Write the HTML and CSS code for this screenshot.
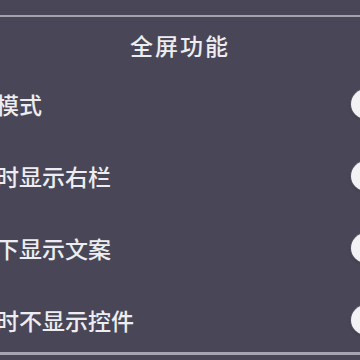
FILE: index.html
```html
<!DOCTYPE html>
<html lang="zh-CN">
<head>
    <meta charset="UTF-8">
    <meta name="viewport" content="width=device-width, initial-scale=1.0">
    <title>全屏功能</title>
    <link rel="stylesheet" href="styles.css">
</head>
<body>
    <div class="sheet">
        <div class="panel">
            <h2 class="panel-title">全屏功能</h2>
            <ul class="option-list">
                <li class="option">
                    <span class="option-label">模式</span>
                    <span class="switch"><span class="knob"></span></span>
                </li>
                <li class="option">
                    <span class="option-label">时显示右栏</span>
                    <span class="switch"><span class="knob"></span></span>
                </li>
                <li class="option">
                    <span class="option-label">下显示文案</span>
                    <span class="switch"><span class="knob"></span></span>
                </li>
                <li class="option">
                    <span class="option-label">时不显示控件</span>
                    <span class="switch"><span class="knob"></span></span>
                </li>
            </ul>
        </div>
    </div>
</body>
</html>
```

FILE: styles.css
```css
body {
    margin: 0;
    width: 360px;
    height: 360px;
    overflow: hidden;
    background-color: #494757;
    font-family: 'Noto Sans CJK SC', 'Noto Sans', sans-serif;
    color: #ededf1;
}

.sheet {
    padding-top: 15px;
    width: 480px;
    margin-left: -60px;
}

.panel {
    border-top: 2px solid #a3a1ad;
    border-bottom: 3px solid #a6a4b0;
}

.panel-title {
    margin: 0;
    text-align: center;
    font-size: 23px;
    font-weight: 500;
    letter-spacing: 2px;
    line-height: 56px;
}

.option-list {
    list-style: none;
    margin: 0;
    padding: 1px 18px 2px 56px;
    display: flex;
    flex-direction: column;
    gap: 12px;
}

.option {
    height: 60px;
    display: flex;
    align-items: center;
    justify-content: space-between;
}

.option-label {
    font-size: 23px;
    font-weight: 500;
    line-height: 1;
}

/* Switches are off: the knob sits at the left end */
.switch {
    width: 52px;
    height: 32px;
    border-radius: 16px;
    background-color: #5e5c6b;
    display: flex;
    align-items: center;
    padding: 1px;
    box-sizing: border-box;
}

.knob {
    width: 30px;
    height: 30px;
    border-radius: 50%;
    background-color: #f2f2f4;
    box-shadow: 0 1px 3px rgba(0, 0, 0, 0.3);
}
```
